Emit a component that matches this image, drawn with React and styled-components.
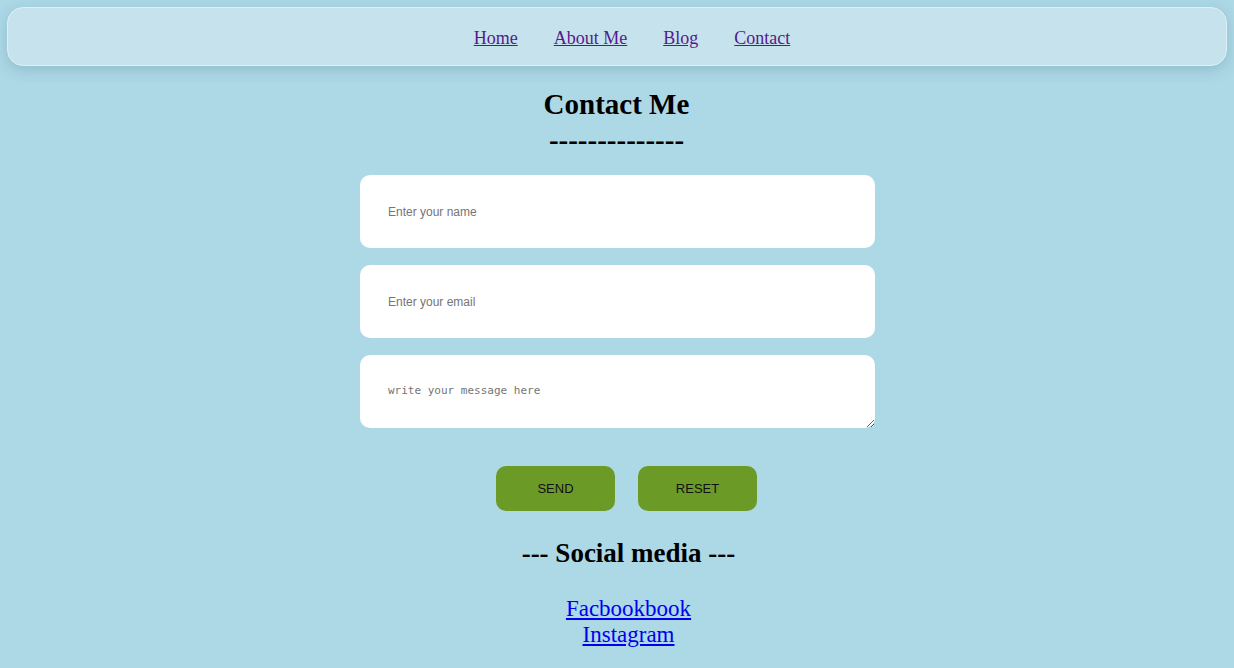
import React from "react";
import styled, { createGlobalStyle } from "styled-components";

const GlobalStyle = createGlobalStyle`
  html, body {
    margin: 0;
    padding: 0;
    background: #add8e6;
    font-family: "Liberation Serif", "Times New Roman", serif;
  }
`;

const Page = styled.div`
  padding: 7px 7px 20px 8px;
  display: flex;
  flex-direction: column;
  align-items: center;
`;

const NavBar = styled.nav`
  align-self: stretch;
  margin-left: -1px;
  height: 59px;
  box-sizing: border-box;
  display: flex;
  justify-content: center;
  align-items: center;
  gap: 36px;
  padding-left: 30px;
  background: #c6e2ec;
  border: 1px solid #dcf0f6;
  border-radius: 16px;
  box-shadow: 0 4px 14px rgba(60, 110, 130, 0.25);
`;

const NavLink = styled.a`
  font-size: 18px;
  color: #551a8b;
  text-decoration: underline;
  padding-top: 3px;
`;

const Heading = styled.h2`
  margin: 20px 2px 0 0;
  font-size: 29px;
  line-height: 36px;
  font-weight: bold;
  text-align: center;
  color: #000;
`;

const Form = styled.form`
  margin-top: 17px;
  width: 515px;
  display: flex;
  flex-direction: column;
  gap: 17px;
`;

const Field = styled.input`
  height: 73px;
  box-sizing: border-box;
  border: none;
  border-radius: 10px;
  background: #fff;
  padding: 0 28px;
  font-family: "Liberation Sans", Arial, sans-serif;
  font-size: 12px;
  outline: none;
  &::placeholder {
    color: #757575;
  }
`;

const Message = styled.textarea`
  height: 73px;
  box-sizing: border-box;
  border: none;
  border-radius: 10px;
  background: #fff;
  padding: 29px 28px 0;
  font-family: "DejaVu Sans Mono", monospace;
  font-size: 11px;
  outline: none;
  &::placeholder {
    color: #757575;
  }
`;

const Buttons = styled.div`
  display: flex;
  justify-content: center;
  gap: 23px;
  margin-top: 21px;
  padding-left: 18px;
`;

const Button = styled.button`
  width: 119px;
  height: 45px;
  border: none;
  border-radius: 10px;
  background: #6b9a27;
  color: #111;
  font-family: "Liberation Sans", Arial, sans-serif;
  font-size: 13px;
  cursor: pointer;
`;

const SubHeading = styled.h3`
  margin: 27px 0 0 22px;
  font-size: 27px;
  line-height: 30px;
  font-weight: bold;
  color: #000;
`;

const Socials = styled.div`
  margin: 28px 0 0 22px;
  display: flex;
  flex-direction: column;
  align-items: center;
`;

const SocialLink = styled.a`
  font-size: 23px;
  line-height: 26px;
  color: #0000ee;
  text-decoration: underline;
`;

export default function App() {
  return (
    <>
      <GlobalStyle />
      <Page>
        <NavBar>
          <NavLink href="#">Home</NavLink>
          <NavLink href="#">About Me</NavLink>
          <NavLink href="#">Blog</NavLink>
          <NavLink href="#">Contact</NavLink>
        </NavBar>
        <Heading>
          Contact Me
          <br />
          --------------
        </Heading>
        <Form onSubmit={e => e.preventDefault()}>
          <Field type="text" placeholder="Enter your name" />
          <Field type="email" placeholder="Enter your email" />
          <Message placeholder="write your message here" />
          <Buttons>
            <Button type="submit">SEND</Button>
            <Button type="reset">RESET</Button>
          </Buttons>
        </Form>
        <SubHeading>--- Social media ---</SubHeading>
        <Socials>
          <SocialLink href="#">Facbookbook</SocialLink>
          <SocialLink href="#">Instagram</SocialLink>
        </Socials>
      </Page>
    </>
  );
}
